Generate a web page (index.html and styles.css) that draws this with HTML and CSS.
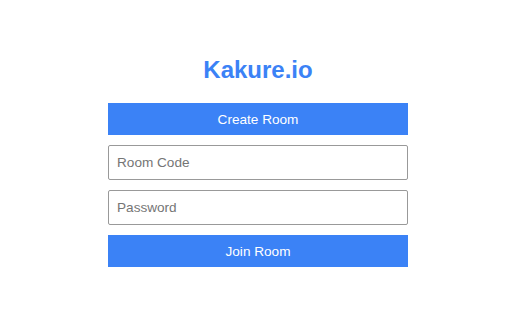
FILE: index.html
```html
<!DOCTYPE html>
<html>
  <head>
    <meta charset="utf-8"/>
    <title>Kakure.io</title>
    <link rel="stylesheet" href="styles.css">
  </head>
  <body>
    <div class="lobby">
      <h1 class="title">Kakure.io</h1>
      <button class="btn" id="create-room">Create Room</button>
      <input class="field" id="room-code" type="text" placeholder="Room Code"/>
      <input class="field" id="room-password" type="password" placeholder="Password"/>
      <button class="btn" id="join-room">Join Room</button>
    </div>
  </body>
</html>
```
FILE: styles.css
```css
html, body {
  margin: 0;
  padding: 0;
  background-color: white;
  font-family: "Liberation Sans", Arial, sans-serif;
}

body {
  padding-left: 4px;
}

.lobby {
  display: flex;
  flex-direction: column;
  width: 300px;
  margin: 0 auto;
  padding-top: 56px;
}

.title {
  margin: 0 0 19px 0;
  font-size: 24px;
  line-height: 28px;
  font-weight: bold;
  text-align: center;
  color: #3b82f6;
}

.btn {
  height: 32px;
  margin: 0;
  padding: 0;
  border: none;
  background-color: #3b82f6;
  color: white;
  font-family: "Liberation Sans", Arial, sans-serif;
  font-size: 13.6px;
}

.field {
  box-sizing: border-box;
  height: 35px;
  margin: 10px 0 0 0;
  padding: 0 8px;
  border: 1px solid #999;
  border-radius: 2px;
  font-family: "Liberation Sans", Arial, sans-serif;
  font-size: 13.6px;
  color: #333;
}

.field::placeholder {
  color: #757575;
}

#join-room {
  margin-top: 10px;
}
```
